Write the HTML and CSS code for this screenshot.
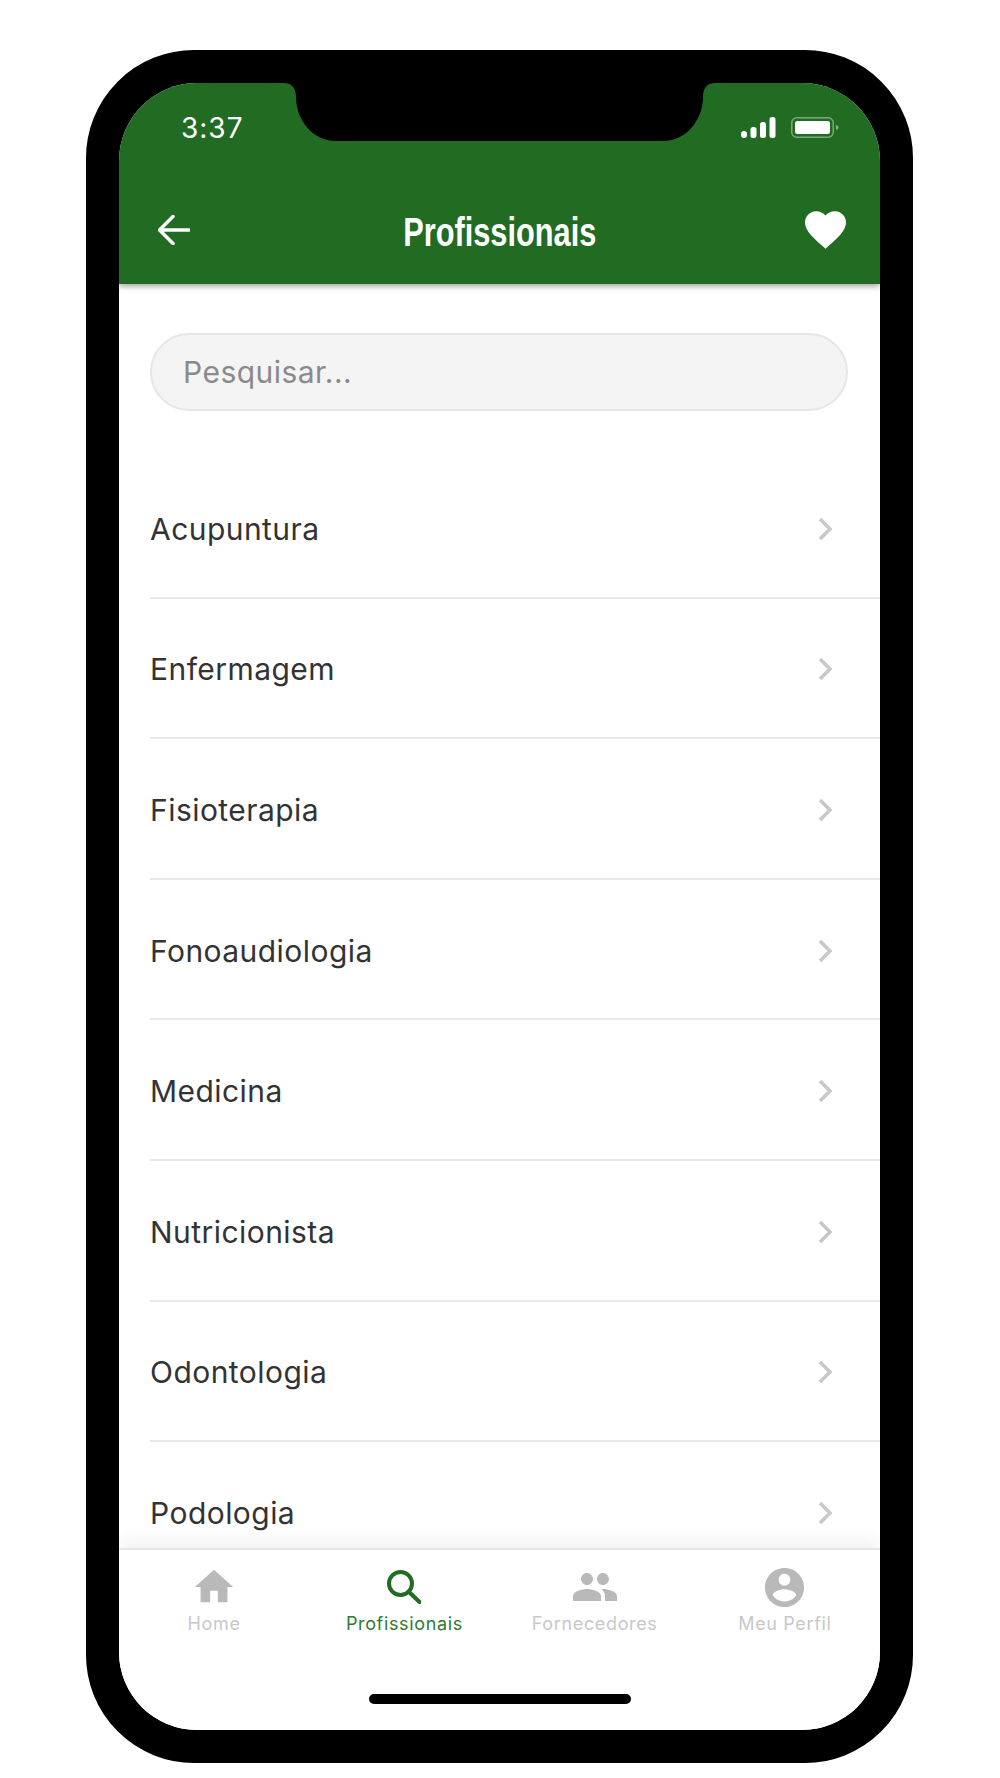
FILE: index.html
```html
<!DOCTYPE html>
<html lang="pt">
<head>
  <meta charset="UTF-8">
  <title>Profissionais</title>
  <link rel="stylesheet" href="styles.css">
</head>
<body>
  <div class="phone">
    <div class="screen">
      <!-- notch sits over the green header -->
      <svg class="notch" viewBox="0 0 431 58"><path d="M0 0C6 0 12 3 12 14C12 36 28 58 52 58H379C403 58 419 36 419 14C419 3 425 0 431 0Z"/></svg>

      <header class="header">
        <div class="status-bar">
          <span class="time">3:37</span>
          <div class="status-icons">
            <svg class="signal" viewBox="0 0 35 21">
              <rect x="0" y="14" width="6" height="7" rx="3"/>
              <rect x="9.5" y="10" width="6" height="11" rx="2.5"/>
              <rect x="19" y="5" width="6" height="16" rx="2.5"/>
              <rect x="28.5" y="0" width="6" height="21" rx="2.5"/>
            </svg>
            <svg class="battery" viewBox="0 0 48 21">
              <rect x="0.75" y="0.75" width="41.5" height="19.5" rx="5" fill="none" stroke="#fff" stroke-opacity="0.4" stroke-width="1.5"/>
              <rect x="4" y="4" width="35" height="13" rx="2.5" fill="#fff"/>
              <path d="M45 8C47 8.5 47.5 9.5 47.5 10.5C47.5 11.5 47 12.5 45 13Z" fill="#fff" fill-opacity="0.45"/>
            </svg>
          </div>
        </div>
        <div class="nav-bar">
          <svg class="back" viewBox="0 0 32 30"><path d="M31 15H2M15 1.5L1.5 15L15 28.5"/></svg>
          <h1 class="title">Profissionais</h1>
          <svg class="heart" viewBox="2 3 20 18.35"><path d="M12 21.35l-1.45-1.32C5.4 15.36 2 12.28 2 8.5 2 5.42 4.42 3 7.5 3c1.74 0 3.41.81 4.5 2.09C13.09 3.81 14.76 3 16.5 3 19.58 3 22 5.42 22 8.5c0 3.78-3.4 6.86-8.55 11.54L12 21.35z"/></svg>
        </div>
      </header>

      <main class="content">
        <div class="search"><span class="search-text">Pesquisar...</span></div>
        <ul class="list">
          <li class="row"><span>Acupuntura</span><svg class="chevron" viewBox="0 0 14 24"><path d="M2 2L12 12L2 22"/></svg></li>
          <li class="row"><span>Enfermagem</span><svg class="chevron" viewBox="0 0 14 24"><path d="M2 2L12 12L2 22"/></svg></li>
          <li class="row"><span>Fisioterapia</span><svg class="chevron" viewBox="0 0 14 24"><path d="M2 2L12 12L2 22"/></svg></li>
          <li class="row"><span>Fonoaudiologia</span><svg class="chevron" viewBox="0 0 14 24"><path d="M2 2L12 12L2 22"/></svg></li>
          <li class="row"><span>Medicina</span><svg class="chevron" viewBox="0 0 14 24"><path d="M2 2L12 12L2 22"/></svg></li>
          <li class="row"><span>Nutricionista</span><svg class="chevron" viewBox="0 0 14 24"><path d="M2 2L12 12L2 22"/></svg></li>
          <li class="row"><span>Odontologia</span><svg class="chevron" viewBox="0 0 14 24"><path d="M2 2L12 12L2 22"/></svg></li>
          <li class="row"><span>Podologia</span><svg class="chevron" viewBox="0 0 14 24"><path d="M2 2L12 12L2 22"/></svg></li>
        </ul>
      </main>

      <footer class="tab-bar">
        <nav class="tabs">
          <div class="tab">
            <div class="tab-icon"><svg class="icon-home" viewBox="0 0 24 24"><path d="M10 20v-6h4v6h5v-8h3L12 3 2 12h3v8z"/></svg></div>
            <span class="tab-label">Home</span>
          </div>
          <div class="tab active">
            <div class="tab-icon"><svg class="icon-search" viewBox="0 0 34 34"><circle cx="13.5" cy="13.5" r="11.5"/><path d="M21.5 21.5L32.5 32"/></svg></div>
            <span class="tab-label">Profissionais</span>
          </div>
          <div class="tab">
            <div class="tab-icon"><svg class="icon-people" viewBox="0 0 24 24"><path d="M16 11c1.66 0 2.99-1.34 2.99-3S17.66 5 16 5c-1.66 0-3 1.34-3 3s1.34 3 3 3zm-8 0c1.66 0 2.99-1.34 2.99-3S9.66 5 8 5C6.34 5 5 6.34 5 8s1.34 3 3 3zm0 2c-2.33 0-7 1.17-7 3.5V19h14v-2.5c0-2.33-4.67-3.5-7-3.5zm8 0c-.29 0-.62.02-.97.05 1.16.84 1.97 1.97 1.97 3.45V19h6v-2.5c0-2.33-4.67-3.5-7-3.5z"/></svg></div>
            <span class="tab-label">Fornecedores</span>
          </div>
          <div class="tab">
            <div class="tab-icon"><svg class="icon-profile" viewBox="0 0 24 24"><path d="M12 2C6.48 2 2 6.48 2 12s4.48 10 10 10 10-4.48 10-10S17.52 2 12 2zm0 3c1.66 0 3 1.34 3 3s-1.34 3-3 3-3-1.34-3-3 1.34-3 3-3zm0 14.2c-2.5 0-4.71-1.28-6-3.22.03-1.99 4-3.08 6-3.08 1.99 0 5.97 1.09 6 3.08-1.29 1.94-3.5 3.22-6 3.22z"/></svg></div>
            <span class="tab-label">Meu Perfil</span>
          </div>
        </nav>
        <div class="home-indicator"></div>
      </footer>
    </div>
  </div>
</body>
</html>
```

FILE: styles.css
```css
* {
  box-sizing: border-box;
}
body {
  margin: 0;
  background-color: #ffffff;
  font-family: "Inter", "Liberation Sans", sans-serif;
}
.phone {
  width: 827px;
  height: 1713px;
  margin: 50px 0 0 86px;
  border: 33px solid #000000;
  border-radius: 108px;
  background-color: #000000;
}
.screen {
  position: relative;
  display: flex;
  flex-direction: column;
  width: 761px;
  height: 1647px;
  border-radius: 78px;
  overflow: hidden;
  background-color: #ffffff;
}
.notch {
  position: absolute;
  top: 0;
  left: 165px;
  width: 431px;
  height: 58px;
  fill: #000000;
  z-index: 3;
}

/* header */
.header {
  position: relative;
  height: 201px;
  flex-shrink: 0;
  background-color: #226b22;
  box-shadow: 0 2px 6px rgba(0, 0, 0, 0.4);
  z-index: 2;
  color: #ffffff;
}
.status-bar {
  display: flex;
  align-items: center;
  justify-content: space-between;
  height: 88px;
  padding: 0 41px 0 62px;
}
.time {
  margin-top: 2px;
  font-size: 28px;
  letter-spacing: 1px;
}
.status-icons {
  display: flex;
  align-items: center;
  gap: 15px;
}
.signal {
  width: 35px;
  height: 21px;
  fill: #ffffff;
}
.battery {
  width: 48px;
  height: 21px;
}
.nav-bar {
  display: grid;
  grid-template-columns: 1fr auto 1fr;
  align-items: center;
  height: 113px;
  padding: 5px 34px 0 39px;
}
.back {
  width: 32px;
  height: 30px;
  fill: none;
  stroke: #ffffff;
  stroke-width: 3.5;
  stroke-linecap: round;
  stroke-linejoin: round;
}
.title {
  margin: 5px 5px 0 0;
  font-family: "Liberation Sans", sans-serif;
  font-size: 41px;
  font-weight: 700;
  transform: scaleX(0.75);
}
.heart {
  justify-self: end;
  width: 41px;
  height: 38px;
  fill: #ffffff;
}

/* list */
.content {
  flex: 1;
  min-height: 0;
  overflow: hidden;
  padding: 49px 0 0 31px;
}
.search {
  display: flex;
  align-items: center;
  width: 698px;
  height: 78px;
  padding-left: 31px;
  background-color: #f4f4f4;
  border: 2px solid #e6e6e6;
  border-radius: 39px;
}
.search-text {
  font-size: 30px;
  letter-spacing: 0.45px;
  color: #8a8a8a;
}
.list {
  margin: 47px 0 0;
  padding: 0;
  list-style: none;
}
.row {
  display: flex;
  align-items: center;
  justify-content: space-between;
  height: 140.6px;
  padding: 3px 48px 0 0;
  border-bottom: 2px solid #e8e8e8;
  font-size: 30px;
  letter-spacing: 0.45px;
  color: #333333;
}
.chevron {
  width: 14px;
  height: 24px;
  fill: none;
  stroke: #c8c8c8;
  stroke-width: 3.5;
}

/* bottom tabs */
.tab-bar {
  position: relative;
  height: 182px;
  flex-shrink: 0;
  border-top: 2px solid #e6e6e6;
  background-color: #ffffff;
  box-shadow: 0 -8px 16px rgba(0, 0, 0, 0.05);
}
.tabs {
  display: grid;
  grid-template-columns: repeat(4, 1fr);
  padding-top: 17px;
}
.tab {
  display: flex;
  flex-direction: column;
  align-items: center;
  gap: 6px;
  color: #c8c8c8;
  fill: #b9b9b9;
}
.tab.active {
  color: #2f7a32;
}
.tab-icon {
  display: flex;
  align-items: center;
  justify-content: center;
  height: 40px;
}
.tab-icon svg {
  flex-shrink: 0;
}
.tab-label {
  font-size: 18px;
  line-height: 22px;
  letter-spacing: 0.65px;
}
.icon-home {
  width: 46px;
  height: 46px;
}
.icon-search {
  width: 34px;
  height: 34px;
  fill: none;
  stroke: #226b22;
  stroke-width: 4;
  stroke-linecap: round;
}
.icon-people {
  width: 48px;
  height: 48px;
}
.icon-profile {
  width: 47px;
  height: 47px;
}
.home-indicator {
  width: 262px;
  height: 10px;
  margin: 59px auto 0;
  border-radius: 5px;
  background-color: #000000;
}
```
